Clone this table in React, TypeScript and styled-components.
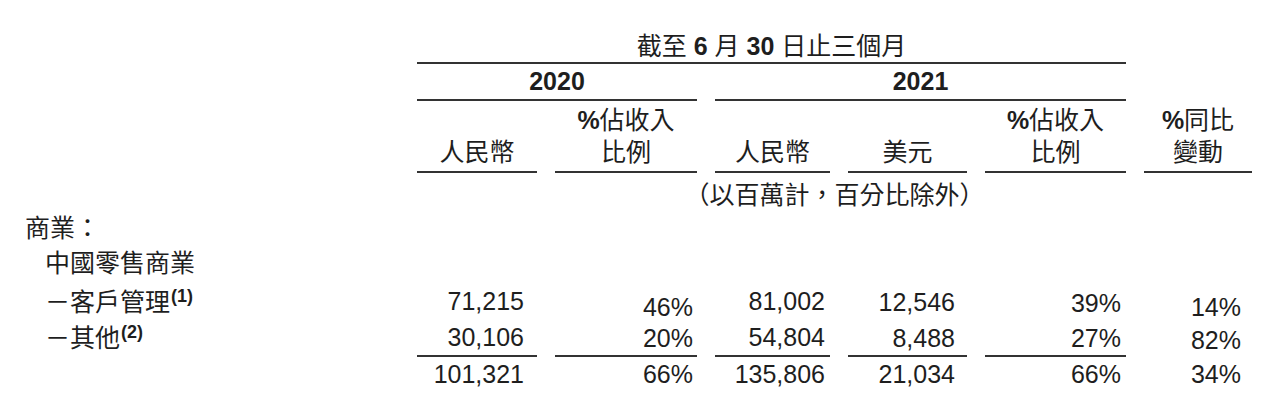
import React from "react";
import styled, { createGlobalStyle } from "styled-components";

const GlobalStyle = createGlobalStyle`
  html, body { margin: 0; padding: 0; background: #ffffff; }
  body { font-family: "Liberation Sans", "Noto Sans CJK TC", sans-serif; }
`;

const RULE = "2px solid #333";
const PAD_RIGHT = [13, 4, 5, 12, 5, 11];

const Page = styled.div`
  width: 1280px;
  height: 413px;
  box-sizing: border-box;
  padding: 30px 0 0 25px;
  overflow: hidden;
  color: #1e1e1e;
  font-family: "Liberation Sans", "Noto Sans CJK TC", sans-serif;
  font-size: 25px;
`;

const Row = styled.div<{ $h: number }>`
  display: grid;
  grid-template-columns: 374px 120px 142px 115px 119px 141px 108px;
  column-gap: 18px;
  height: ${(p) => p.$h}px;
`;

const SpanCell = styled.div<{ $from: number; $to: number; $rule?: boolean; $lh: number; $pt?: number }>`
  grid-column: ${(p) => p.$from} / ${(p) => p.$to};
  box-sizing: border-box;
  text-align: center;
  line-height: ${(p) => p.$lh}px;
  padding-top: ${(p) => p.$pt ?? 0}px;
  border-bottom: ${(p) => (p.$rule ? RULE : "none")};
  white-space: nowrap;
`;

const HeadCell = styled.div`
  box-sizing: border-box;
  display: flex;
  flex-direction: column;
  justify-content: flex-end;
  align-items: center;
  padding-bottom: 3px;
  line-height: 32px;
  border-bottom: ${RULE};
  white-space: nowrap;
`;

const Bold = styled.span`
  font-weight: 700;
`;

const Label = styled.div<{ $indent: number }>`
  grid-column: 1 / 2;
  display: flex;
  align-items: center;
  padding-left: ${(p) => p.$indent}px;
  white-space: nowrap;
`;

const LabelText = styled.span`
  line-height: 30px;
`;

const Note = styled.span`
  font-size: 18px;
  font-weight: 700;
  line-height: 0;
  vertical-align: 9px;
  margin-left: 1px;
`;

const NumCell = styled.div<{ $pr: number; $rule?: boolean; $drop?: number }>`
  box-sizing: border-box;
  display: flex;
  align-items: center;
  justify-content: flex-end;
  padding-right: ${(p) => p.$pr}px;
  padding-top: ${(p) => (p.$drop ?? 0) * 2}px;
  border-bottom: ${(p) => (p.$rule ? RULE : "none")};
  white-space: nowrap;
`;

type DataRow = {
  label: React.ReactNode;
  values: string[];
  h: number;
  rule?: boolean[];
  drop?: number[];
};

const rows: DataRow[] = [
  {
    label: (
      <>
        －客戶管理<Note>(1)</Note>
      </>
    ),
    values: ["71,215", "46%", "81,002", "12,546", "39%", "14%"],
    h: 38,
    drop: [0, 6, 0, 1, 2, 6],
  },
  {
    label: (
      <>
        －其他<Note>(2)</Note>
      </>
    ),
    values: ["30,106", "20%", "54,804", "8,488", "27%", "82%"],
    h: 38,
    rule: [true, true, true, true, true, false],
    drop: [0, 1, 0, 1, 1, 2],
  },
  {
    label: "",
    values: ["101,321", "66%", "135,806", "21,034", "66%", "34%"],
    h: 34,
  },
];

export default function App() {
  return (
    <>
      <GlobalStyle />
      <Page>
        <Row $h={34}>
          <SpanCell $from={2} $to={7} $rule $lh={32}>
            截至 <Bold>6</Bold> 月 <Bold>30</Bold> 日止三個月
          </SpanCell>
        </Row>
        <Row $h={37}>
          <SpanCell $from={2} $to={4} $rule $lh={35}>
            <Bold>2020</Bold>
          </SpanCell>
          <SpanCell $from={4} $to={7} $rule $lh={35}>
            <Bold>2021</Bold>
          </SpanCell>
        </Row>
        <Row $h={72}>
          <div />
          <HeadCell>
            <span>人民幣</span>
          </HeadCell>
          <HeadCell>
            <span>
              <Bold>%</Bold>佔收入
            </span>
            <span>比例</span>
          </HeadCell>
          <HeadCell>
            <span>人民幣</span>
          </HeadCell>
          <HeadCell>
            <span>美元</span>
          </HeadCell>
          <HeadCell>
            <span>
              <Bold>%</Bold>佔收入
            </span>
            <span>比例</span>
          </HeadCell>
          <HeadCell>
            <span>
              <Bold>%</Bold>同比
            </span>
            <span>變動</span>
          </HeadCell>
        </Row>
        <Row $h={37}>
          <SpanCell $from={2} $to={8} $lh={30} $pt={7}>
            （以百萬計，百分比除外）
          </SpanCell>
        </Row>
        <Row $h={35}>
          <Label $indent={0}>
            <LabelText>商業：</LabelText>
          </Label>
        </Row>
        <Row $h={36}>
          <Label $indent={20}>
            <LabelText>中國零售商業</LabelText>
          </Label>
        </Row>
        {rows.map((r, i) => (
          <Row $h={r.h} key={i}>
            <Label $indent={20}>
              <LabelText>{r.label}</LabelText>
            </Label>
            {r.values.map((v, j) => (
              <NumCell
                key={j}
                $pr={PAD_RIGHT[j]}
                $rule={r.rule ? r.rule[j] : false}
                $drop={r.drop ? r.drop[j] : 0}
              >
                {v}
              </NumCell>
            ))}
          </Row>
        ))}
      </Page>
    </>
  );
}
